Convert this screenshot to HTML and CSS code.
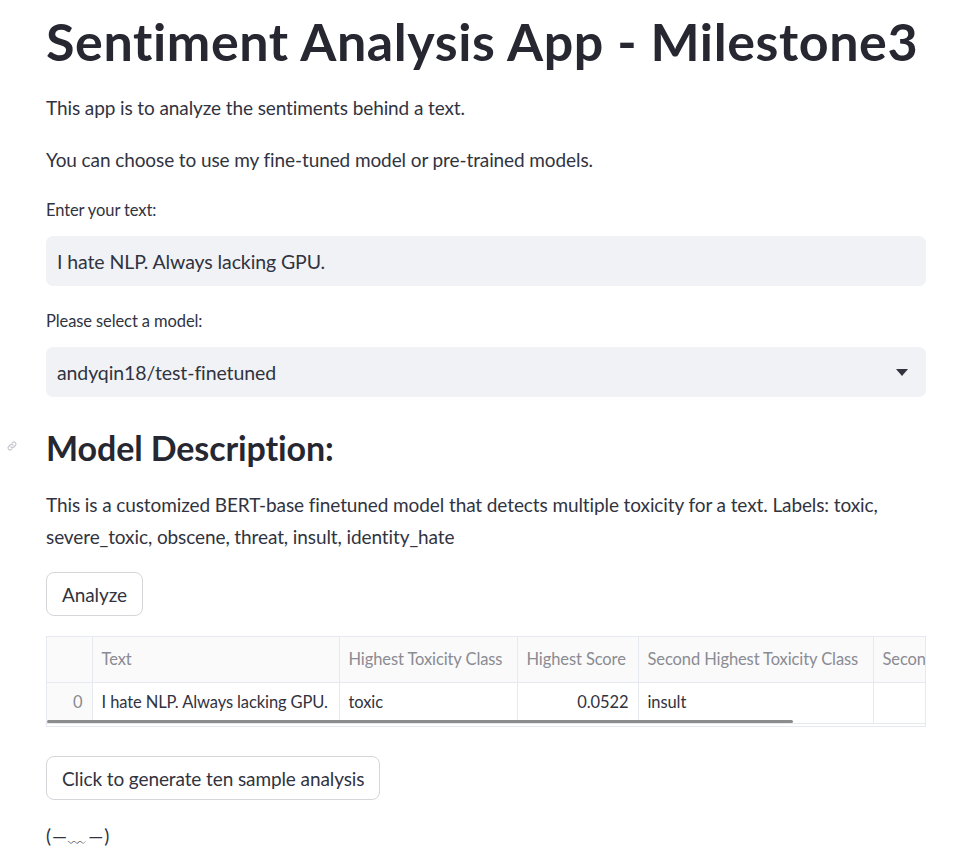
FILE: index.html
```html
<!DOCTYPE html>
<html>
<head>
<meta charset="utf-8">
<link rel="stylesheet" href="styles.css">
</head>
<body>
<main class="main">
  <h1 class="title">Sentiment Analysis App - Milestone3</h1>
  <p class="para p1">This app is to analyze the sentiments behind a text.</p>
  <p class="para p2">You can choose to use my fine-tuned model or pre-trained models.</p>

  <label class="label">Enter your text:</label>
  <div class="field">I hate NLP. Always lacking GPU.</div>

  <label class="label">Please select a model:</label>
  <div class="field select">
    <span>andyqin18/test-finetuned</span>
    <svg class="caret" width="12" height="7" viewBox="0 0 12 7"><path d="M0 0h12L6 7z" fill="#31333f"/></svg>
  </div>

  <div class="h2wrap">
    <svg class="anchor" width="12" height="12" viewBox="0 0 24 24" fill="none" stroke="#c8c9cf" stroke-width="2.5" stroke-linecap="round"><path d="M10 14a4 4 0 0 0 5.7 0l3-3a4 4 0 0 0-5.7-5.7l-1 1"/><path d="M14 10a4 4 0 0 0-5.7 0l-3 3a4 4 0 0 0 5.7 5.7l1-1"/></svg>
    <h2 class="subtitle">Model Description:</h2>
  </div>
  <p class="para desc">This is a customized BERT-base finetuned model that detects multiple toxicity for a text. Labels: toxic, severe_toxic, obscene, threat, insult, identity_hate</p>

  <button class="btn btn-analyze">Analyze</button>

  <div class="table-wrap">
    <table class="df">
      <colgroup>
        <col class="c0"><col class="c1"><col class="c2"><col class="c3"><col class="c4"><col class="c5">
      </colgroup>
      <thead>
        <tr><th></th><th>Text</th><th>Highest Toxicity Class</th><th>Highest Score</th><th>Second Highest Toxicity Class</th><th>Second Highest Score</th></tr>
      </thead>
      <tbody>
        <tr><td class="idx">0</td><td>I hate NLP. Always lacking GPU.</td><td>toxic</td><td class="num">0.0522</td><td>insult</td><td class="num">0.0136</td></tr>
      </tbody>
    </table>
    <div class="scrollbar"></div>
  </div>

  <button class="btn btn-gen">Click to generate ten sample analysis</button>

  <p class="kaomoji">(—﹏—)</p>
</main>
</body>
</html>
```

FILE: styles.css
```css
* { box-sizing: border-box; }
html, body { margin: 0; padding: 0; background: #fff; }
body {
  font-family: "Lato", "Liberation Sans", sans-serif;
  color: #31333f;
  font-size: 19px;
  letter-spacing: -0.1px;
  overflow: hidden;
}
.main {
  width: 880px;
  margin-left: 46px;
  display: flex;
  flex-direction: column;
  align-items: flex-start;
}
.title {
  font-size: 52px;
  font-weight: 700;
  line-height: 66px;
  margin: 8px 0 0 0;
  letter-spacing: 0.6px;
  white-space: nowrap;
  color: #262730;
}
.para { margin: 0; line-height: 32px; }
.p1 { margin-top: 18px; }
.p2 { margin-top: 20px; }
.label {
  font-size: 16.5px;
  line-height: 22px;
  margin-top: 23px;
}
.field {
  margin-top: 15px;
  width: 880px;
  height: 50px;
  background: #f0f2f6;
  border-radius: 7px;
  padding: 0 11px;
  display: flex;
  align-items: center;
  font-size: 19.5px;
}
.select { justify-content: space-between; padding-right: 18px; }
.field + .label { margin-top: 24px; }
.h2wrap {
  position: relative;
  margin-top: 28px;
}
.anchor { position: absolute; left: -40px; top: 15px; }
.subtitle {
  margin: 0;
  font-size: 34px;
  font-weight: 700;
  line-height: 46px;
  color: #262730;
}
.desc { margin-top: 18px; }
.btn {
  font-family: inherit;
  font-size: 19px;
  letter-spacing: -0.1px;
  color: #31333f;
  background: #fff;
  border: 1px solid #d5d6da;
  border-radius: 8px;
  height: 44px;
  padding: 0 15px;
}
.btn-analyze { margin-top: 19px; }
.table-wrap {
  position: relative;
  margin-top: 20px;
  width: 880px;
  height: 91px;
  overflow: hidden;
  border: 1px solid #e6e9ef;
}
.df {
  border-collapse: collapse;
  table-layout: fixed;
  width: 1060px;
  font-size: 16.5px;
}
.c0 { width: 45px; } .c1 { width: 247px; } .c2 { width: 178px; }
.c3 { width: 121px; } .c4 { width: 235px; } .c5 { width: 234px; }
.df th, .df td {
  height: 45px;
  padding: 0 9px;
  border-right: 1px solid #e6e9ef;
  border-bottom: 1px solid #e6e9ef;
  text-align: left;
  white-space: nowrap;
  overflow: hidden;
}
.df td { height: 41px; padding-bottom: 2px; }
.df th {
  font-weight: 400;
  color: #8a8b93;
  background: #fafafa;
}
.df td.idx { text-align: right; color: #8a8b93; background: #fafafa; }
.df td.num { text-align: right; }
.scrollbar {
  position: absolute;
  left: 0;
  top: 83px;
  width: 746px;
  height: 3px;
  background: #8c8c8c;
  border-radius: 2px;
}
.btn-gen { margin-top: 29px; }
.kaomoji { margin: 20px 0 0 0; line-height: 32px; letter-spacing: 1px; }
```
